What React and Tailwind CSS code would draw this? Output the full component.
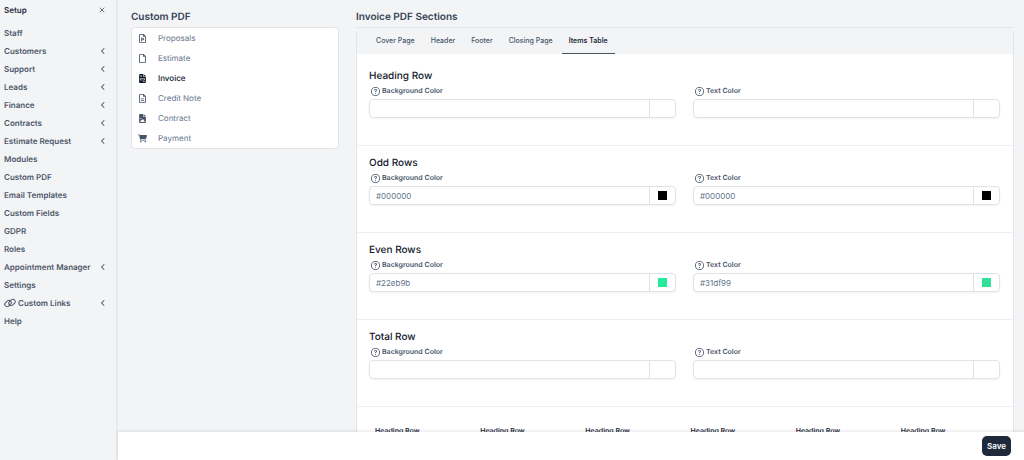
import React from 'react';
import {
  FaAngleLeft,
  FaCartShopping,
  FaFileImage,
  FaFileInvoice,
  FaRegCircleQuestion,
  FaRegFile,
  FaRegFileLines,
  FaRegFilePowerpoint,
} from 'react-icons/fa6';
import { X } from 'lucide-react';

const MENU = [
  { label: 'Staff' },
  { label: 'Customers', expandable: true },
  { label: 'Support', expandable: true },
  { label: 'Leads', expandable: true },
  { label: 'Finance', expandable: true },
  { label: 'Contracts', expandable: true },
  { label: 'Estimate Request', expandable: true },
  { label: 'Modules' },
  { label: 'Custom PDF' },
  { label: 'Email Templates' },
  { label: 'Custom Fields' },
  { label: 'GDPR' },
  { label: 'Roles' },
  { label: 'Appointment Manager', expandable: true },
  { label: 'Settings' },
  { label: 'Custom Links', expandable: true, icon: LinkIcon },
  { label: 'Help' },
];

const PDF_TYPES = [
  { label: 'Proposals', icon: FaRegFilePowerpoint },
  { label: 'Estimate', icon: FaRegFile },
  { label: 'Invoice', icon: FaFileInvoice, active: true },
  { label: 'Credit Note', icon: FaRegFileLines },
  { label: 'Contract', icon: FaFileImage },
  { label: 'Payment', icon: FaCartShopping },
];

const TABS = ['Cover Page', 'Header', 'Footer', 'Closing Page', 'Items Table'];

const SECTIONS = [
  { id: 'heading', title: 'Heading Row', background: '', text: '' },
  { id: 'odd', title: 'Odd Rows', background: '#000000', text: '#000000' },
  { id: 'even', title: 'Even Rows', background: '#22eb9b', text: '#31df99' },
  { id: 'total', title: 'Total Row', background: '', text: '' },
];

const COLUMNS = [1, 2, 3, 4, 5, 6];

function LinkIcon() {
  return (
    <svg viewBox="0 0 24 20" className="h-[10px] w-[12px]" fill="none" stroke="currentColor" strokeWidth="2">
      <rect x="1" y="6.5" width="14" height="9" rx="4.5" transform="rotate(-40 8 11)" />
      <rect x="9" y="4.5" width="14" height="9" rx="4.5" transform="rotate(-40 16 9)" />
    </svg>
  );
}

function Sidebar() {
  return (
    <aside className="w-[118px] shrink-0 border-r-2 border-[#e7e9ed] pl-1 text-[#4b5669]">
      <div className="flex h-5 items-center justify-between pr-[10px]">
        <span className="font-semibold text-[#1e293b]">Setup</span>
        <button type="button" aria-label="Close setup menu">
          <X className="size-[8px]" strokeWidth={2.5} />
        </button>
      </div>
      <nav className="mt-1">
        {MENU.map(({ label, expandable, icon: Icon }) => (
          <a key={label} href="#" className="flex h-[18px] items-center justify-between pr-[9px] font-semibold whitespace-nowrap">
            <span className="flex items-center gap-0.5">
              {Icon ? <Icon /> : null}
              {label}
            </span>
            {expandable ? <FaAngleLeft className="size-[8px]" /> : null}
          </a>
        ))}
      </nav>
    </aside>
  );
}

function ColorField({ id, label, value }) {
  return (
    <div>
      <label htmlFor={id} className="flex h-3 items-center gap-0.5 pl-0.5 text-[7px] font-semibold text-[#475569]">
        <FaRegCircleQuestion className="size-[9px]" />
        {label}
      </label>
      <div className="mt-0.5 flex h-[19px] overflow-hidden rounded-[4px] border border-[#dfe2e7] shadow-xs">
        <input
          id={id}
          type="text"
          defaultValue={value}
          className="min-w-0 flex-1 px-[6px] text-[#64748b] outline-none"
        />
        <button
          type="button"
          aria-label={`Pick ${label.toLowerCase()}`}
          className="flex w-[26px] items-center justify-center border-l border-[#dfe2e7]"
        >
          {value ? <span className="size-[9px]" style={{ backgroundColor: value }} /> : null}
        </button>
      </div>
    </div>
  );
}

function RowSection({ section }) {
  return (
    <section className="h-[87px] border-b border-[#eceef1] pt-[10px] pr-[13px] pl-3">
      <h4 className="text-[10px] leading-[14px] font-medium text-[#0f172a]">{section.title}</h4>
      <div className="mt-0.5 grid grid-cols-2 gap-[17px]">
        <ColorField id={`${section.id}-background`} label="Background Color" value={section.background} />
        <ColorField id={`${section.id}-text`} label="Text Color" value={section.text} />
      </div>
    </section>
  );
}

export default function App() {
  return (
    <div className="flex h-screen overflow-hidden bg-[#f3f4f6] font-['Inter',sans-serif] text-[8px] leading-3 [text-rendering:geometricPrecision]">
      <Sidebar />
      <div className="flex min-w-0 flex-1 flex-col">
        <main className="grid min-h-0 flex-1 grid-cols-12 gap-[17px] overflow-hidden pr-[10px] pl-[13px]">
          <div className="col-span-3 pt-[10px]">
            <h3 className="text-[10px] leading-[14px] font-semibold text-[#334155]">Custom PDF</h3>
            <ul className="mt-[3px] rounded-[4px] border border-[#e2e5e9] bg-white">
              {PDF_TYPES.map(({ label, icon: Icon, active }) => (
                <li key={label}>
                  <a
                    href="#"
                    className={`flex h-5 items-center pl-[6px] ${active ? 'font-medium text-[#0f172a]' : 'text-[#64748b]'}`}
                  >
                    <span className={`w-5 ${active ? 'text-[#0f172a]' : 'text-[#475569]'}`}>
                      <Icon className="h-[9px] w-auto" />
                    </span>
                    {label}
                  </a>
                </li>
              ))}
            </ul>
          </div>

          <div className="col-span-9 pt-[10px]">
            <h3 className="text-[10px] leading-[14px] font-semibold text-[#334155]">Invoice PDF Sections</h3>
            <div className="mt-[3px] border-t border-[#e5e7eb] pt-1">
              <div className="border-x border-[#e2e5e9]">
                <div role="tablist" className="flex h-[22px] gap-[2px] pl-3 text-[7px]">
                  {TABS.map((tab) => {
                    const selected = tab === 'Items Table';
                    return (
                      <button
                        key={tab}
                        type="button"
                        role="tab"
                        aria-selected={selected}
                        className={`border-b px-[7px] pb-1 ${selected ? 'border-[#475569] font-semibold text-[#1e293b]' : 'border-transparent font-medium text-[#475569]'}`}
                      >
                        {tab}
                      </button>
                    );
                  })}
                </div>
                <div className="bg-white pt-[5px]">
                  {SECTIONS.map((section) => (
                    <RowSection key={section.id} section={section} />
                  ))}
                  <div className="grid grid-cols-6 pt-[18px] pr-[13px] pb-8 pl-3 text-[7px]">
                    {COLUMNS.map((column) => (
                      <h5 key={column} className="px-[6px] font-semibold text-[#1e293b]">
                        Heading Row
                      </h5>
                    ))}
                  </div>
                </div>
              </div>
            </div>
          </div>
        </main>
        <footer className="z-10 flex h-7 shrink-0 items-center justify-end bg-white pr-[13px] shadow-[0_-1px_3px_rgba(0,0,0,0.1)]">
          <button type="button" className="h-5 rounded-[5px] bg-[#1e293b] px-[5px] font-semibold text-white">
            Save
          </button>
        </footer>
      </div>
    </div>
  );
}
